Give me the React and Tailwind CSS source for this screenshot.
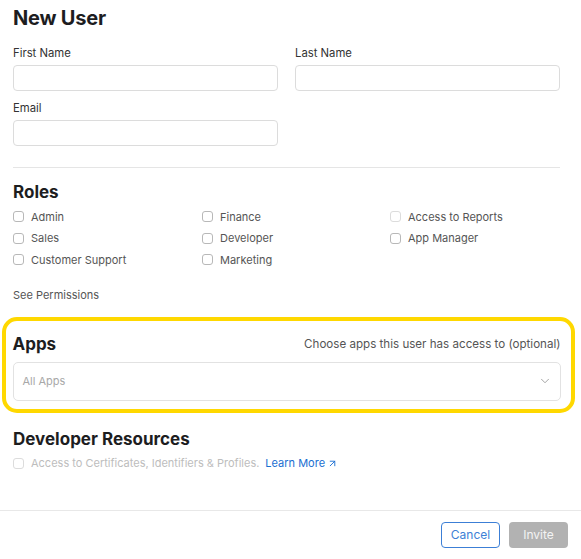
import React from "react";
import { ChevronDown, ArrowUpRight } from "lucide-react";

const Field = ({ label }) => (
  <div className="flex flex-col">
    <label className="text-[11.3px] text-[#333] leading-[14px] mb-[5px]">{label}</label>
    <input className="h-[26px] rounded-[4px] border border-[#dcdcdc] px-2 text-[12px] outline-none" />
  </div>
);

const Check = ({ label, disabled, faint }) => (
  <label className="flex items-center gap-[7px] h-[21.5px]">
    <span
      className={`w-[11px] h-[11px] rounded-[3px] border ${
        disabled || faint ? "border-[#dcdcdc]" : "border-[#b8b8b8]"
      } bg-white shrink-0`}
    />
    <span className={`text-[11px] ${disabled ? "text-[#bdbdbd]" : "text-[#555]"}`}>{label}</span>
  </label>
);

const roles = [
  ["Admin", "Finance", "Access to Reports"],
  ["Sales", "Developer", "App Manager"],
  ["Customer Support", "Marketing", null],
];

export default function App() {
  return (
    <div className="w-[581px] h-[559px] bg-white flex flex-col font-['Inter',sans-serif] text-[#1d1d1f]">
      <div className="pl-[13px] pr-[21px] flex-1">
        <h1 className="text-[20px] font-bold leading-[24px] pt-[6px] tracking-[-0.2px]">New User</h1>

        <div className="grid grid-cols-2 gap-x-[17px] mt-[16px]">
          <Field label="First Name" />
          <Field label="Last Name" />
        </div>
        <div className="grid grid-cols-2 gap-x-[17px] mt-[10px]">
          <Field label="Email" />
        </div>

        <div className="h-px bg-[#e5e5e5] mt-[21px]" />

        <h2 className="text-[17px] font-bold leading-[20px] mt-[14px]">Roles</h2>
        <div className="mt-[4px]">
          {roles.map((row, i) => (
            <div key={i} className="grid grid-cols-[189px_188px_1fr]">
              {row.map((r, j) =>
                r ? <Check key={j} label={r} faint={r === "Access to Reports"} /> : <div key={j} />
              )}
            </div>
          ))}
        </div>

        <div className="text-[11px] text-[#555] mt-[16px] leading-[16px]">See Permissions</div>

        {/* highlighted apps section */}
        <div className="-ml-[11px] -mr-[15px] mt-[14px] border-[4.5px] border-[#ffd800] rounded-[15px] pl-[6.5px] pr-[10.5px] pt-[12px] pb-[8px]">
          <div className="flex items-center justify-between">
            <h2 className="text-[17px] font-bold leading-[22px]">Apps</h2>
            <span className="text-[11.6px] text-[#555] leading-[18px]">Choose apps this user has access to (optional)</span>
          </div>
          <div className="mt-[7px] h-[39px] rounded-[5px] border border-[#e2e2e2] flex items-center justify-between pl-[9px] pr-[8px]">
            <span className="text-[11px] text-[#a8a8a8]">All Apps</span>
            <ChevronDown size={14} strokeWidth={1.3} className="text-[#888]" />
          </div>
        </div>

        <h2 className="text-[17px] font-bold leading-[22px] mt-[15px]">Developer Resources</h2>
        <div className="flex items-center mt-[3px]">
          <Check label="Access to Certificates, Identifiers & Profiles." disabled />
          <a className="ml-[6px] text-[11px] text-[#1a6fd1] flex items-center gap-[2px]">
            Learn More
            <ArrowUpRight size={11} strokeWidth={2} />
          </a>
        </div>
      </div>

      <div className="h-px bg-[#e8e8e8]" />
      <div className="h-[48px] flex items-center justify-end gap-[9px] pr-[13px] pb-[1px]">
        <button className="w-[59px] h-[26px] rounded-[4px] border border-[#3c7fd6] text-[#3c7fd6] text-[12px]">
          Cancel
        </button>
        <button className="w-[59px] h-[26px] rounded-[4px] bg-[#b2b2b2] text-[#f4f4f4] text-[12px]">
          Invite
        </button>
      </div>
    </div>
  );
}
